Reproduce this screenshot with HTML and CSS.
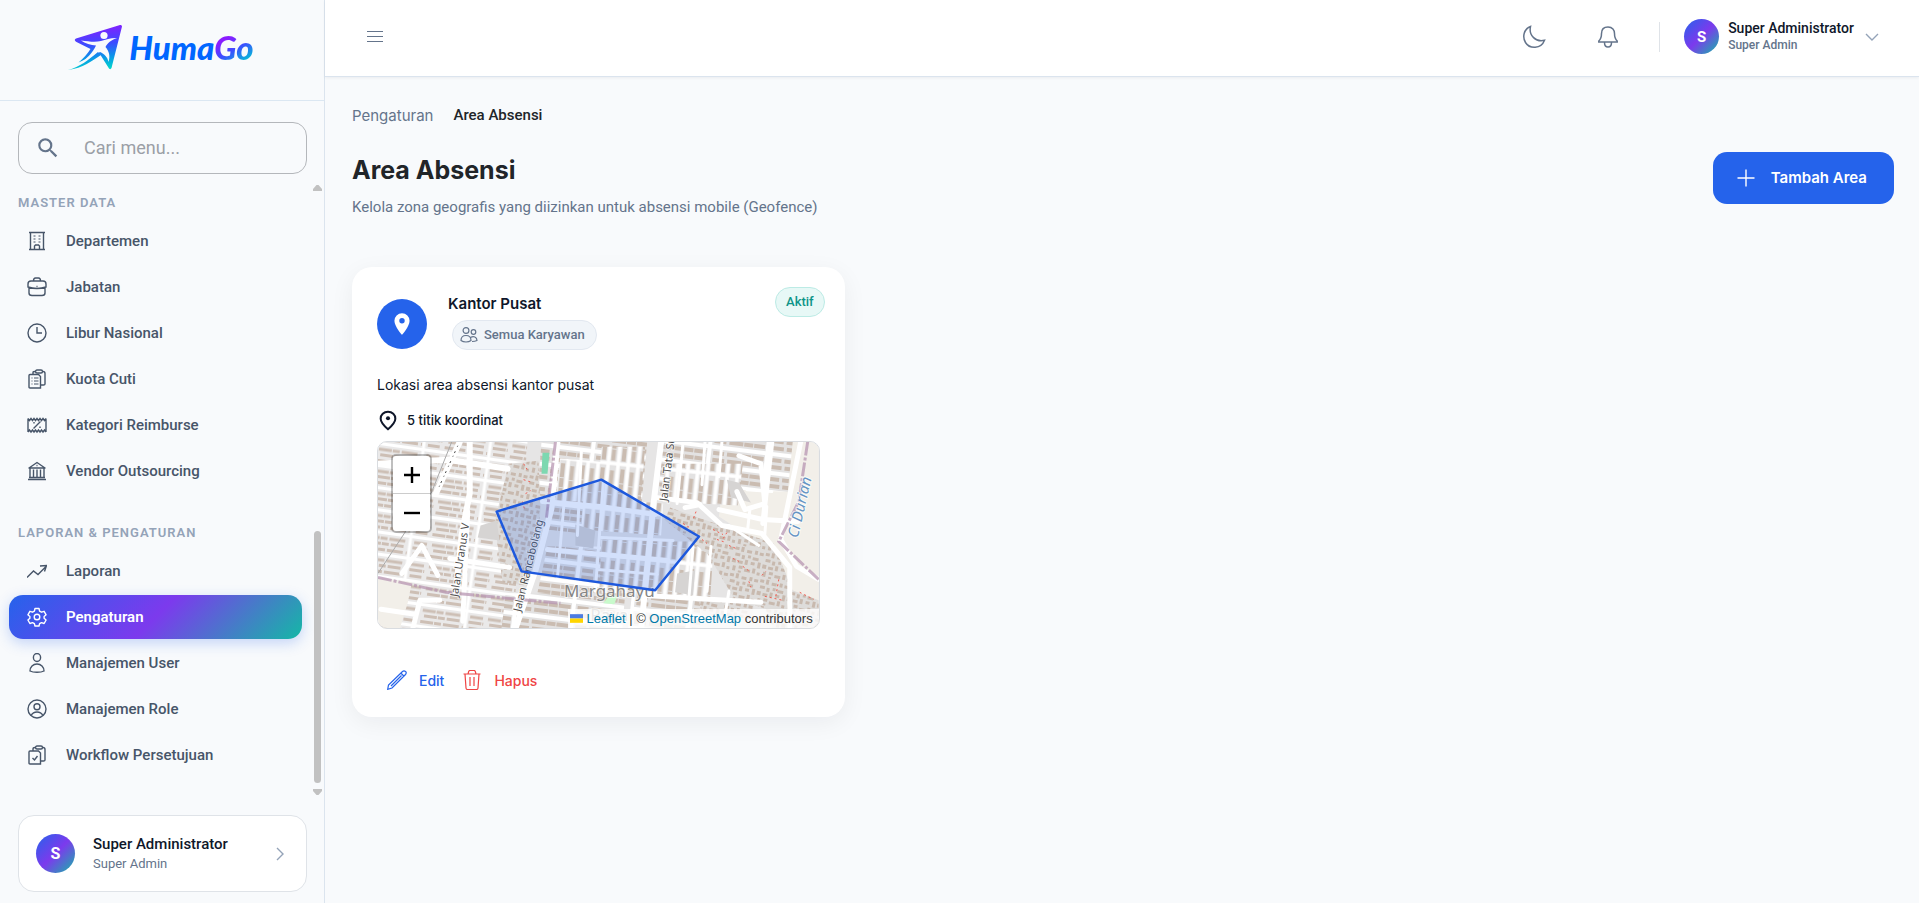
FILE: index.html
```html
<!DOCTYPE html>
<html lang="id">
<head>
<meta charset="utf-8">
<meta name="viewport" content="width=device-width, initial-scale=1">
<title>Area Absensi - HumaGo</title>
<link rel="stylesheet" href="styles.css">
</head>
<body>
<div class="app">
  <aside class="sidebar">
    <a class="brand" href="#" aria-label="HumaGo">
      <svg class="brand-mark" viewBox="0 0 54 46" aria-hidden="true">
        <defs><linearGradient id="mark" gradientUnits="userSpaceOnUse" x1="34" y1="2" x2="38" y2="46"><stop offset="0" stop-color="#8320ff"/><stop offset=".4" stop-color="#3a4cff"/><stop offset=".7" stop-color="#0a96e8"/><stop offset="1" stop-color="#00dcc8"/></linearGradient></defs>
        <path fill="url(#mark)" d="M52 1 8 14.500q-2.500 1.500 0 3.200L22.500 25c-3 5-7 9-12 13.500C21 34 27 30 32.500 31L41 44.500q1.500 1.500 2.500-.5L54 2.500Q54 .500 52 1z"/>
        <path fill="#f8fafc" d="M13 16.500c8 1 14 2 20 .5 5-1.500 11-3.500 16-3-6 2-9.500 5-11.500 9 3.500 4 5 9 3 15-1-5-4-8-8.500-10-6 3.500-12 9-22 12.500C19 35 25 28 28 21.500c-5-.5-11-2-15-5z"/>
        <circle cx="36" cy="11.500" r="3.600" fill="#f8fafc"/>
        <path fill="url(#mark)" d="M0 46c12-3 20-10 30-18l3 3C24 37 15 44 0 46z"/>
      </svg>
      <span class="brand-name">Huma<span class="brand-go">Go</span></span>
    </a>

    <label class="search">
      <svg viewBox="0 0 24 24" aria-hidden="true"><path fill="currentColor" d="M9.500 3A6.500 6.500 0 0 1 16 9.500c0 1.610-.59 3.090-1.560 4.230l.27.270h.790l5 5-1.500 1.500-5-5v-.79l-.27-.27A6.520 6.520 0 0 1 9.500 16a6.500 6.500 0 0 1 0-13m0 2C7 5 5 7 5 9.500S7 14 9.500 14 14 12 14 9.500 12 5 9.500 5"/></svg>
      <input type="text" placeholder="Cari menu..." aria-label="Cari menu">
    </label>

    <div class="nav-area">
      <nav class="nav">
        <section>
          <h2>Master Data</h2>
          <a href="#"><svg viewBox="0 0 20 20"><path d="M2 1.500h16M2 18.500h16M3.500 1.500v17M16.500 1.500v17M7.500 18.500V15l1-1h3l1 1v3.500"/><path class="dots" d="M6.500 5h2M11.500 5h2M6.500 8h2M11.500 8h2M6.500 11h2M11.500 11h2"/></svg>Departemen</a>
          <a href="#"><svg viewBox="0 0 20 20"><path d="M4 4h12q3 0 3 3v3q-9 3-18 0V7q0-3 3-3zM2 10.500V16q0 2.500 3 2.500h10q3 0 3-2.500v-5.500M6.500 4q0-3 2-3h3q2 0 2 3M9.500 9.500h1"/></svg>Jabatan</a>
          <a href="#"><svg viewBox="0 0 20 20"><circle cx="10" cy="10" r="9"/><path d="M10 4v6h5"/></svg>Libur Nasional</a>
          <a href="#"><svg viewBox="0 0 20 20"><path d="M3 5.500h8.500l2 2V19H3q-1 0-1-1V6.500q0-1 1-1zM6 5V3.500Q6 2.500 8 2.500M16 2.500q2 0 2 2V15q0 1-1.500 1h-3"/><rect x="8.500" y="1" width="7" height="3" rx="1.500"/><path class="dots" d="M4.500 9h1M7 9h4.500M4.500 12h1M7 12h4.500M4.500 15h1M7 15h4.500"/></svg>Kuota Cuti</a>
          <a href="#"><svg viewBox="0 0 20 20"><path d="M1 3.500v13.500M19 3.500v13.500M1 3.500l1.500 2 1.500-2 1.500 2 1.500-2 1.500 2 1.500-2 1.500 2 1.500-2 1.500 2 1.500-2 1.500 2 1.500-2M1 17l1.500-2 1.500 2 1.500-2 1.500 2 1.500-2 1.500 2 1.500-2 1.500 2 1.500-2 1.500 2 1.500-2 1.500 2M13.500 6.500l-7 7M7 7v1.500M13 11.500V13"/></svg>Kategori Reimburse</a>
          <a href="#"><svg viewBox="0 0 20 20"><path d="M1 18.500h18M2 16.500h16M1.500 7h17M2 7l8-5.500L18 7M3 7v9.500M6.500 8.500v8M10 8.500v8M13.500 8.500v8M17 7v9.500M9.500 4.500h1"/></svg>Vendor Outsourcing</a>
        </section>
        <section>
          <h2>Laporan &amp; Pengaturan</h2>
          <a href="#"><svg viewBox="0 0 20 20"><path d="M0 16.500 6.500 10l4.500 3.500L18.500 6M13 5l6.500-.5-2 6"/></svg>Laporan</a>
          <a href="#" class="active" aria-current="page"><svg viewBox="0 0 20 20"><circle cx="10" cy="10" r="2.800"/><path d="M8 1.500h4l.6 2.600 1.900 1.100 2.600-.9 2 3.500-2 1.700v1.800l2 1.700-2 3.500-2.600-.9-1.900 1.100-.6 2.300H8l-.6-2.300-1.900-1.100-2.600.9-2-3.500 2-1.700V9.500l-2-1.700 2-3.500 2.600.9 1.900-1.100z" stroke-linejoin="round"/></svg>Pengaturan</a>
          <a href="#"><svg viewBox="0 0 20 20"><ellipse cx="10" cy="4.500" rx="3.600" ry="4"/><path d="M10 11c4 0 7 3 7 7q-2.500 1.300-7 1.300T3 18c0-4 3-7 7-7z"/></svg>Manajemen User</a>
          <a href="#"><svg viewBox="0 0 20 20"><circle cx="10" cy="10" r="9"/><circle cx="10" cy="7.700" r="3"/><path d="M4 16.500q2-3.500 6-3.500t6 3.500"/></svg>Manajemen Role</a>
          <a href="#"><svg viewBox="0 0 20 20"><path d="M3 6h8.500l2 2v11H3q-1 0-1-1V7q0-1 1-1zM6 5.500V4Q6 2.500 8 2.500M16 2.500q2 0 2 2V15q0 1-1.500 1h-3M5.500 13l2 2 3-4"/><rect x="8.500" y="1" width="7" height="3" rx="1.500"/></svg>Workflow Persetujuan</a>
        </section>
      </nav>
      <div class="scroller" aria-hidden="true">
        <svg viewBox="0 0 9 6"><path d="M3.500 0h2L9 4v2H0V4z"/></svg>
        <div class="scroll-track"><div class="scroll-thumb"></div></div>
        <svg viewBox="0 0 9 6"><path d="M3.500 6h2L9 2V0H0v2z"/></svg>
      </div>
    </div>

    <a class="account" href="#">
      <span class="avatar">S</span>
      <span class="person"><strong>Super Administrator</strong><small>Super Admin</small></span>
      <svg class="chevron" viewBox="0 0 16 16" aria-hidden="true"><path d="m5 2 6 6-6 6"/></svg>
    </a>
  </aside>

  <div class="page">
    <header class="topbar">
      <button class="icon-button menu" aria-label="Menu"><svg viewBox="0 0 16 16"><path d="M0 2.500h16M0 7.500h16M0 12.500h16"/></svg></button>
      <div class="top-actions">
        <button class="icon-button" aria-label="Mode gelap"><svg viewBox="0 0 24 24"><path d="M8.500 1.500C2 4 0 11.500 3.500 17.500c4 6.500 15.500 7 19-2.200C14 17.500 6.500 10.500 8.500 1.500z"/></svg></button>
        <button class="icon-button" aria-label="Notifikasi"><svg viewBox="0 0 24 24"><path d="M12 2c-4.500 0-6.500 3-6.500 6.500 0 4-1 6-2.700 7.500v1h18.400v-1c-1.700-1.500-2.700-3.500-2.700-7.500C18.500 5 16.500 2 12 2zM8.500 17.500c0 6 7 6 7 0"/></svg></button>
        <span class="divider"></span>
        <button class="profile">
          <span class="avatar">S</span>
          <span class="person"><strong>Super Administrator</strong><small>Super Admin</small></span>
          <svg class="chevron" viewBox="0 0 16 16" aria-hidden="true"><path d="m2 5 6 6 6-6"/></svg>
        </button>
      </div>
    </header>

    <main class="content">
      <nav class="crumbs" aria-label="Breadcrumb"><a href="#">Pengaturan</a><span>Area Absensi</span></nav>
      <div class="heading">
        <div>
          <h1>Area Absensi</h1>
          <p>Kelola zona geografis yang diizinkan untuk absensi mobile (Geofence)</p>
        </div>
        <button class="add"><svg viewBox="0 0 18 18" aria-hidden="true"><path d="M9 .500v17M.500 9h17"/></svg>Tambah Area</button>
      </div>

      <div class="areas">
        <article class="card">
          <div class="card-head">
            <span class="pin"><svg viewBox="0 0 24 24" aria-hidden="true"><path fill="#fff" d="M12 11.500A2.500 2.500 0 0 1 9.500 9 2.500 2.500 0 0 1 12 6.500 2.500 2.500 0 0 1 14.500 9a2.500 2.500 0 0 1-2.500 2.500M12 2a7 7 0 0 0-7 7c0 5.250 7 13 7 13s7-7.750 7-13a7 7 0 0 0-7-7"/></svg></span>
            <div class="card-title">
              <h3>Kantor Pusat</h3>
              <span class="chip"><svg viewBox="0 0 18 16" aria-hidden="true"><circle cx="6" cy="3.500" r="2.900"/><circle cx="13.500" cy="5" r="2.300"/><path d="M6 8.500c3 0 5 2 5 5q-2 1.500-5 1.500t-5-1.500c0-3 2-5 5-5zM10.500 10.500c3-2 6.500-.5 6.500 3q-2 1-5 1"/></svg>Semua Karyawan</span>
            </div>
            <span class="status">Aktif</span>
          </div>
          <p class="desc">Lokasi area absensi kantor pusat</p>
          <p class="points"><svg viewBox="0 0 24 24" aria-hidden="true"><path d="M12 3c-4.700 0-8 3.300-8 7.500 0 3.500 4 8 8 11.500 4-3.500 8-8 8-11.500C20 6.300 16.700 3 12 3z" stroke="currentColor" stroke-width="2.200"/><circle cx="12" cy="10" r="2.200" fill="currentColor"/></svg>5 titik koordinat</p>

          <div class="map">
            <svg class="tiles" viewBox="0 0 442 187" preserveAspectRatio="xMidYMid slice" role="img" aria-label="Peta area absensi">
              <defs>
                <pattern id="rows" width="66" height="22" patternUnits="userSpaceOnUse" patternTransform="rotate(8)">
                  <rect width="66" height="22" fill="#eae9e9"/><path stroke="#fff" stroke-width="3" d="M0 1.500h66M46 0v22"/><path stroke="#cdbfb5" stroke-width="3" stroke-dasharray="13 1 7 2 16 3" d="M2 7h42M50 7h14M4 12.500h36M49 12.500h15M1 18.500h43M50 18.500h12"/>
                </pattern>
                <pattern id="flat" width="58" height="19" patternUnits="userSpaceOnUse" patternTransform="rotate(7)">
                  <rect width="58" height="19" fill="#e3e2e2"/><path stroke="#fff" stroke-width="4" d="M0 2h58M41 0v19"/><path stroke="#cabcb1" stroke-width="4" stroke-dasharray="14 1 9 1" d="M1 8h37M45 8h11M2 15h36M45 15h12"/>
                </pattern>
                <pattern id="cols" width="20" height="46" patternUnits="userSpaceOnUse" patternTransform="rotate(6)">
                  <rect width="20" height="46" fill="#e3e2e2"/><path stroke="#fff" stroke-width="3.500" d="M2 0v46M0 43h20M12 0v46"/><path stroke="#cabcb1" stroke-width="4" stroke-dasharray="14 1 9 1" d="M7 2v38M16.500 4v36"/>
                </pattern>
                <pattern id="dense" width="31" height="27" patternUnits="userSpaceOnUse" patternTransform="rotate(12)">
                  <rect width="31" height="27" fill="#dedcda"/><path fill="#c8b9ae" d="M1 1h4v3H1zM7 0h3v5H7zM13 2h5v3h-5zM21 1h3v4h-3zM26 2h4v3h-4zM2 7h5v3H2zM9 8h3v4H9zM15 7h3v3h-3zM20 8h6v3h-6zM0 13h4v4H0zM6 14h5v3H6zM13 12h3v5h-3zM19 13h4v3h-4zM26 12h3v6h-3zM2 20h3v5H2zM8 19h4v3H8zM14 21h6v3h-6zM22 19h3v5h-3zM27 22h3v3h-3zM8 24h3v2H8z"/>
                </pattern>
              </defs>
              <rect width="442" height="187" fill="#e6e5e5"/>
              <path fill="url(#rows)" d="M0 0h150l-15 187H0z"/>
              <path fill="#f2efe9" d="M0 136l34 5-4 20-8 26H0zM372 0h70v187h-20l-34-82-46-30 3-26 46-4z"/>
              <path fill="url(#flat)" d="M164 0h106l-6 66-104-12z"/>
              <path fill="url(#cols)" d="M184 5h84l-5 60-85-6z"/>
              <path fill="url(#flat)" d="M165 0h60l-2 20-60-5zM170 105h56l-4 52-62-6zM170 60h38l-2 32-38-4z"/>
              <path fill="url(#cols)" d="M206 56l80 6-2 32-80-6zM224 98l72 2-18 56-56-4z"/>
              <path fill="url(#flat)" d="M284 0h132l-5 50-129-5zM255 150h68v37h-72zM128 152h120l-3 35H124z"/>
              <path fill="url(#cols)" d="M288 22h78l-5 42-76-4zM287 100h50l-4 60-54-5z"/>
              <path fill="url(#dense)" d="M131 22l30-3 2 50-10 76-28-4-8-60zM293 66l28 10 76 26 20 50v25l-60-20-26-44-44-35zM376 134l66 25v28h-46zM322 160l56-6-3 24-50-5z"/>
              <path fill="#d6d4d3" d="M103 84l16-5 3 20-22-3zM198 83l20 6-2 18-18-3zM300 132l18-3-2 25-18-3zM350 38l12 3 12 20-20-5z"/>
              <g fill="none" stroke="#fff" stroke-linecap="round" stroke-linejoin="round">
                <path stroke-width="6" d="M92 0v52l-8 40-6 60M82 0l-24 52M138 187l20-58 16-62 6-67M284 0l-8 65-12 122M0 22l70-4 60 9"/>
                <path stroke-width="5" d="M24 132l20-28 16 30M72 117l60 9M280 56l40 5 25 23 40 8 28 34v61M395 0l-9 82M424 0l-20 98 16 27 22 13M342 68l44 10 35 2M90 70l-5 110M35 187l7-28h20M3 168l34 5M264 154l120 7M170 108l55 5 66 6M165 60l58 5 55 8M308 66l15-3M360 50l8 18 20-6-4-40-22-8"/>
                <path stroke-width="3" d="M188 46l-8 90M204 10l-4 84M226 40l-8 110M306 0l-6 62M328 0l-3 43M345 0l-3 35M220 128l60 5M224 96l72 3M316 105l-4 50M334 105l-4 45M352 84l30 20M373 68l-2 18M390 65l-2 28M370 48l25 2M352 150l-5 30"/>
              </g>
              <path d="M74 0 54 50 0 132" stroke="#aaa" stroke-width="1" fill="none"/>
              <path d="M80 4 60 48" stroke="#444" stroke-width="1" stroke-dasharray="1 5 2 3" fill="none"/>
              <path d="M0 136l68 15 115 11M178 0l-9 76M431 0l-9 60-20 40 40 38" stroke="#b795b2" stroke-width="3" stroke-dasharray="14 2 3 2" opacity=".75" fill="none"/>
              <path fill="#7dd8b0" d="M165 11h7l-2 21h-6z"/><path fill="#c8facc" d="M232 154l8 1-3 8-11-1z"/>
              <path d="M146 22l5 8M146 38l9 3M148 52l5-3M145 60l2 8M306 82l8 5M319 70l-3 8M336 88l10 5M340 98l9 3M352 104l7 3M356 117l6 3M366 125l8 6M372 140l2 6M385 134l4-4M388 155l18 4M402 138l-3 17M423 151l14 7M325 98l5 4M350 91l-5 8" stroke="#f25b50" stroke-width="1" stroke-dasharray="2 3" fill="none"/>
              <g class="map-labels">
                <text class="place" x="232" y="156" text-anchor="middle">Margahayu</text><text class="place" x="232" y="180" text-anchor="middle">Raya</text>
                <text transform="translate(80 156) rotate(-81)">Jalan Uranus V</text>
                <text transform="translate(143 171) rotate(-76)">Jalan Rancabolang</text>
                <text transform="translate(290 60) rotate(-83)">Jalan Tata Su</text>
                <text class="river" transform="translate(421 97) rotate(-77)">Ci Durian</text>
              </g>
              <path d="M119 70 224 38 322 95 278 149 144 130z" fill="#2563eb" fill-opacity=".2" stroke="#1d58dd" stroke-width="2.500" stroke-linejoin="round"/>
            </svg>
            <div class="zoom-controls"><button aria-label="Perbesar"><svg viewBox="0 0 16 16"><path d="M0 8h16M8 0v16"/></svg></button><button aria-label="Perkecil"><svg viewBox="0 0 16 16"><path d="M0 8h16"/></svg></button></div>
            <div class="attribution"><svg viewBox="0 0 12 8" aria-hidden="true"><path fill="#4c7be1" d="M0 0h12v4H0z"/><path fill="#ffd500" d="M0 4h12v4H0z"/></svg> <a href="#">Leaflet</a> | © <a href="#">OpenStreetMap</a> contributors</div>
          </div>

          <div class="actions">
            <button class="edit"><svg viewBox="0 0 20 20" aria-hidden="true"><path d="M.700 19.300 1.500 15 15.500 1.500q1.500-1.200 3 0t0 3L5 18zM13.800 3l3 3M4 16 14.500 5.500"/></svg>Edit</button>
            <button class="delete"><svg viewBox="0 0 20 20" aria-hidden="true"><path d="M1.500 4h17M6 4l.7-2.500q.3-1 1.300-1h4q1 0 1.300 1L14 4M3 4l1 14q.1 1.500 1.500 1.500h9q1.400 0 1.500-1.500l1-14M8 7v9M12 7v9"/></svg>Hapus</button>
          </div>
        </article>
      </div>
    </main>
  </div>
</div>
</body>
</html>
```
FILE: styles.css
```css
* { box-sizing: border-box; }
body { margin: 0; font-family: Roboto, "Liberation Sans", sans-serif; color: #0f172a; background: #f8fafc; }
h1, h2, h3, p { margin: 0; }
a { color: inherit; text-decoration: none; }
button { font: inherit; color: inherit; border: 0; padding: 0; background: none; cursor: pointer; }
svg { flex: none; fill: none; stroke-width: 1.4; }

.app { display: flex; min-height: 100vh; }
.sidebar { display: flex; flex-direction: column; flex: none; width: 325px; height: 100vh; border-right: 1px solid #dbe4ee; }
.page { flex: 1; min-width: 0; }

.brand { display: flex; align-items: center; justify-content: center; gap: 7px; height: 101px; padding: 0 2px 6px 0; border-bottom: 1px solid #dbe7f2; }
.brand-mark { width: 54px; height: 46px; }
.brand-name { font: italic 900 33px/40px Lato, sans-serif; color: #0066ff; }
.brand-go { background: linear-gradient(150deg, #8b1cff 30%, #3a50ff 55%, #00c4d4 85%); background-clip: text; -webkit-background-clip: text; color: transparent; }

.search { display: flex; align-items: center; gap: 23px; height: 52px; margin: 21px 17px 0 18px; padding: 0 16px; border: 1px solid #b4b7bb; border-radius: 14px; }
.search svg { width: 26px; height: 26px; color: #64748b; }
.search input { flex: 1; min-width: 0; padding: 0; border: 0; outline: 0; background: none; font: 400 18px/24px Roboto, sans-serif; color: #0f172a; }
.search input::placeholder { color: #9b9fa6; opacity: 1; }

.nav-area { display: flex; flex: 1; min-height: 0; margin-top: 8px; }
.nav { flex: 1; min-width: 0; padding: 0 0 0 9px; }
.nav section { margin-bottom: 19px; }
.nav h2 { height: 37px; padding: 12px 9px 0; font-size: 13px; line-height: 18px; font-weight: 600; letter-spacing: 1px; text-transform: uppercase; color: #94a3b8; }
.nav a { display: flex; align-items: center; gap: 19px; height: 44px; margin-bottom: 2px; padding: 0 18px; border-radius: 14px; font-size: 15px; font-weight: 500; color: #475569; }
.nav svg { width: 20px; height: 20px; stroke: currentColor; }
.nav .dots { stroke-width: 1.2; }
.nav .active { color: #fff; font-weight: 600; background: linear-gradient(135deg, #2563eb 0%, #7c3aed 50%, #14b8a6 100%); box-shadow: 0 4px 14px rgba(37, 99, 235, .25); }
.scroller { display: flex; flex-direction: column; align-items: center; gap: 6px; flex: none; width: 9px; margin: 3px 2px 20px 11px; }
.scroller svg { width: 9px; height: 6px; fill: #c1c1c1; }
.scroll-track { display: flex; align-items: flex-end; flex: 1; }
.scroll-thumb { width: 7px; height: 43%; border-radius: 4px; background: #c1c1c1; }

.account { display: flex; align-items: center; height: 77px; margin: 0 17px 11px 18px; padding: 0 18px 0 17px; border: 1px solid #dfe3e8; border-radius: 16px; background: #fff; }
.avatar { display: grid; place-items: center; flex: none; width: 39px; height: 39px; border-radius: 50%; background: linear-gradient(135deg, #2563eb 0%, #7c3aed 50%, #14b8a6 100%); color: #fff; font-size: 16px; font-weight: 700; }
.person { display: flex; flex-direction: column; text-align: left; }
.account .person { flex: 1; margin-left: 18px; }
.person strong { font-size: 15px; line-height: 20px; font-weight: 500; }
.person small { font-size: 13px; line-height: 20px; color: #64748b; }
.chevron { width: 16px; height: 16px; stroke: #94a3b8; }

.topbar { display: flex; align-items: center; justify-content: space-between; height: 77px; padding: 0 39px 3px 26px; background: #fff; border-bottom: 1px solid #dbe4ee; box-shadow: 0 1px 3px rgba(15, 23, 42, .06); }
.icon-button { display: grid; place-items: center; width: 48px; height: 48px; }
.icon-button svg { width: 24px; height: 24px; stroke: #64748b; stroke-width: 1.5; }
.menu svg { width: 16px; height: 16px; stroke-width: 1; }
.top-actions { display: flex; align-items: center; }
.icon-button + .icon-button { margin-left: 26px; }
.divider { width: 1px; height: 30px; margin: 0 24px 0 27px; background: #dfe3e8; }
.profile { display: flex; align-items: center; }
.profile .avatar { width: 35px; height: 35px; font-size: 15px; }
.profile .person { margin: 0 10px 0 9px; }
.profile strong { font-size: 14px; line-height: 17px; }
.profile small { font-size: 12px; line-height: 16px; font-weight: 500; }

.content { padding: 24px 25px 24px 27px; }
.crumbs { display: flex; align-items: center; gap: 20px; height: 28px; font-size: 15px; }
.crumbs a { font-family: Inter, sans-serif; color: #64748b; }
.crumbs span { font-weight: 500; color: #212529; }
.heading { display: flex; align-items: flex-start; justify-content: space-between; margin-top: 23px; }
.heading h1 { font: 700 25px/36px Inter, sans-serif; color: #212529; }
.heading p { margin-top: 8px; font-size: 15px; line-height: 22px; color: #64748b; }
.add { display: flex; align-items: center; gap: 16px; height: 52px; padding: 0 27px 0 24px; border-radius: 14px; background: #2563eb; color: #fff; font: 600 15px/20px Inter, sans-serif; }
.add svg { width: 18px; height: 18px; stroke: #fff; }

.areas { display: grid; grid-template-columns: repeat(3, 1fr); gap: 32px; margin-top: 49px; }
.card { padding: 20px 25px 17px; border-radius: 20px; background: #fff; box-shadow: 0 6px 24px rgba(15, 23, 42, .06); font-family: Inter, sans-serif; }
.card-head { display: flex; align-items: flex-start; }
.pin { display: grid; place-items: center; width: 50px; height: 50px; margin-top: 12px; border-radius: 50%; background: #2563eb; }
.pin svg { width: 26px; height: 26px; }
.card-title { flex: 1; margin-left: 21px; padding-top: 5px; }
.card-title h3 { font-size: 15px; line-height: 24px; font-weight: 600; }
.chip { display: inline-flex; align-items: center; gap: 6px; height: 30px; margin: 4px 0 0 4px; padding: 0 11px 0 7px; border: 1px solid #e2e8f0; border-radius: 15px; background: #f1f5f9; font: 500 13px/18px Roboto, sans-serif; color: #64748b; }
.chip svg { width: 18px; height: 16px; stroke: currentColor; stroke-width: 1.2; }
.status { height: 30px; margin-right: -5px; padding: 0 10px; border: 1px solid #bcebe5; border-radius: 15px; background: #e7f8f6; font: 500 13px/28px Roboto, sans-serif; color: #0d9488; }
.desc { margin-top: 25px; font-size: 14px; line-height: 20px; }
.points { display: flex; align-items: center; gap: 8px; margin-top: 14px; font-size: 13px; line-height: 22px; font-weight: 500; }
.points svg { width: 22px; height: 22px; }

.map { position: relative; height: 188px; margin-top: 10px; overflow: hidden; border: 1px solid #d9dce0; border-radius: 10px; }
.tiles { display: block; width: 100%; height: 100%; }
.map-labels { font-family: "Noto Sans", sans-serif; font-size: 11px; fill: #505050; paint-order: stroke; stroke: rgba(255, 255, 255, .7); stroke-width: 2px; }
.place { font-size: 17px; fill: #858585; }
.river { font-size: 15px; font-style: italic; fill: #6594c4; }
.zoom-controls { position: absolute; top: 12px; left: 13px; display: grid; overflow: hidden; border: 2px solid rgba(0, 0, 0, .25); border-radius: 5px; background-clip: padding-box; }
.zoom-controls button { display: grid; place-items: center; width: 37px; height: 37px; background: #fff; }
.zoom-controls button + button { height: 38px; border-top: 1px solid #ccc; }
.zoom-controls svg { width: 16px; height: 16px; stroke: #000; stroke-width: 2.4; }
.attribution { position: absolute; right: 0; bottom: 0; padding: 0 6px 0 2px; background: rgba(255, 255, 255, .8); font: 13px/19px "Liberation Sans", sans-serif; color: #333; }
.attribution a { color: #0078a8; }
.attribution svg { width: 13px; height: 9px; }

.actions { display: flex; gap: 18px; margin-top: 31px; padding-left: 10px; }
.actions button { display: flex; align-items: center; gap: 12px; height: 40px; font-size: 14px; font-weight: 500; }
.actions svg { width: 20px; height: 20px; stroke: currentColor; stroke-width: 1.2; }
.edit { color: #2563eb; }
.delete { color: #ef4444; }
```
